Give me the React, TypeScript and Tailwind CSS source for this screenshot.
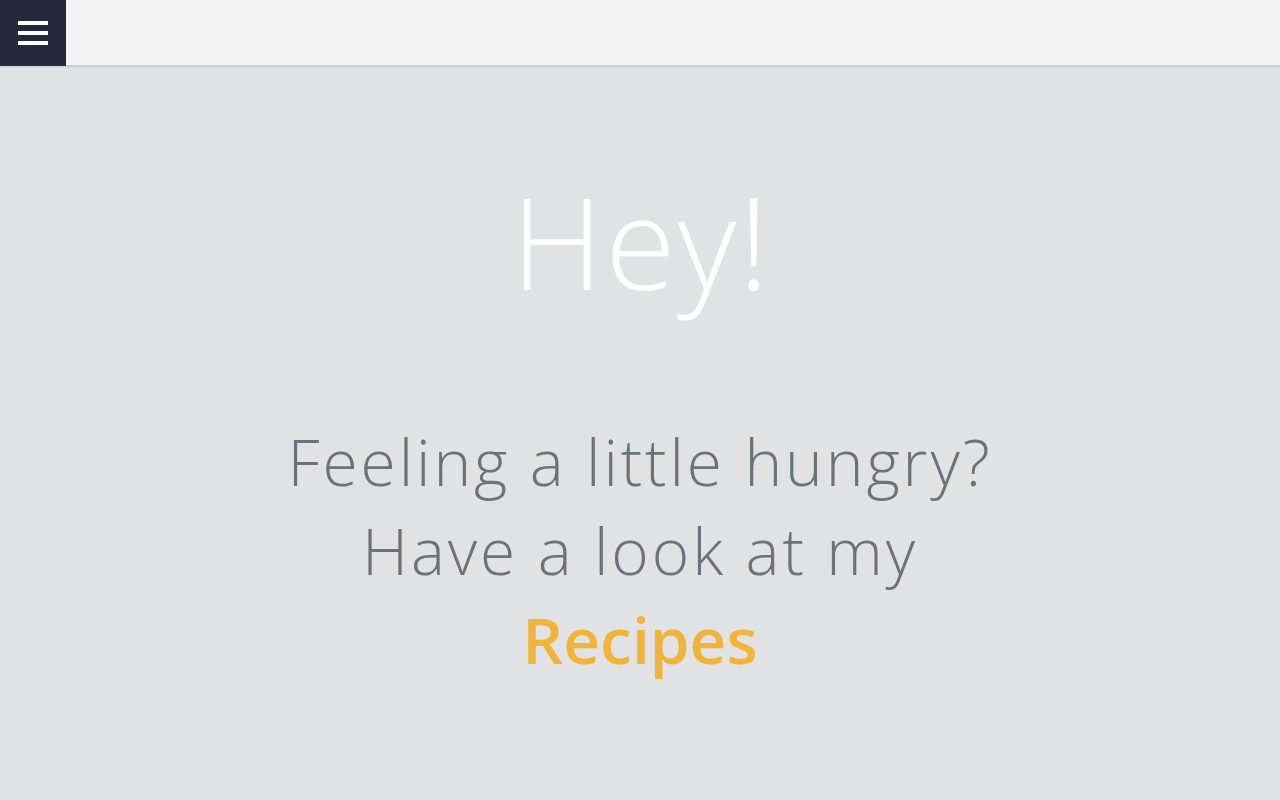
import { FunctionComponent } from 'react'

const Header: FunctionComponent = () => {
  return (
    <header className="h-[66px] flex bg-[#f4f4f4] border-b border-[#c9cacc] shadow-[0_1px_2px_rgba(0,0,0,0.12)]">
      <button className="w-[66px] h-[66px] bg-[#24283b] flex flex-col items-center justify-center gap-[6px]">
        <span className="block w-[30px] h-[4px] bg-white" />
        <span className="block w-[30px] h-[4px] bg-white" />
        <span className="block w-[30px] h-[4px] bg-white" />
      </button>
    </header>
  )
}

export default function App() {
  return (
    <div className="min-h-[800px] bg-[#e1e2e4] font-['Open_Sans',sans-serif]">
      <Header />
      <main className="flex flex-col items-center text-center pt-[111px]">
        <h1 className="text-[128px] leading-[128px] font-light text-white tracking-[2px] pl-[2px]">Hey!</h1>
        <div className="mt-[112px] text-[64px] leading-[89px] font-light text-[#6a737b] tracking-[2.9px]">
          <p>Feeling a little hungry?</p>
          <p>Have a look at my</p>
          <a href="#" className="block font-semibold text-[#f0b43a] tracking-normal">Recipes</a>
        </div>
      </main>
    </div>
  )
}
